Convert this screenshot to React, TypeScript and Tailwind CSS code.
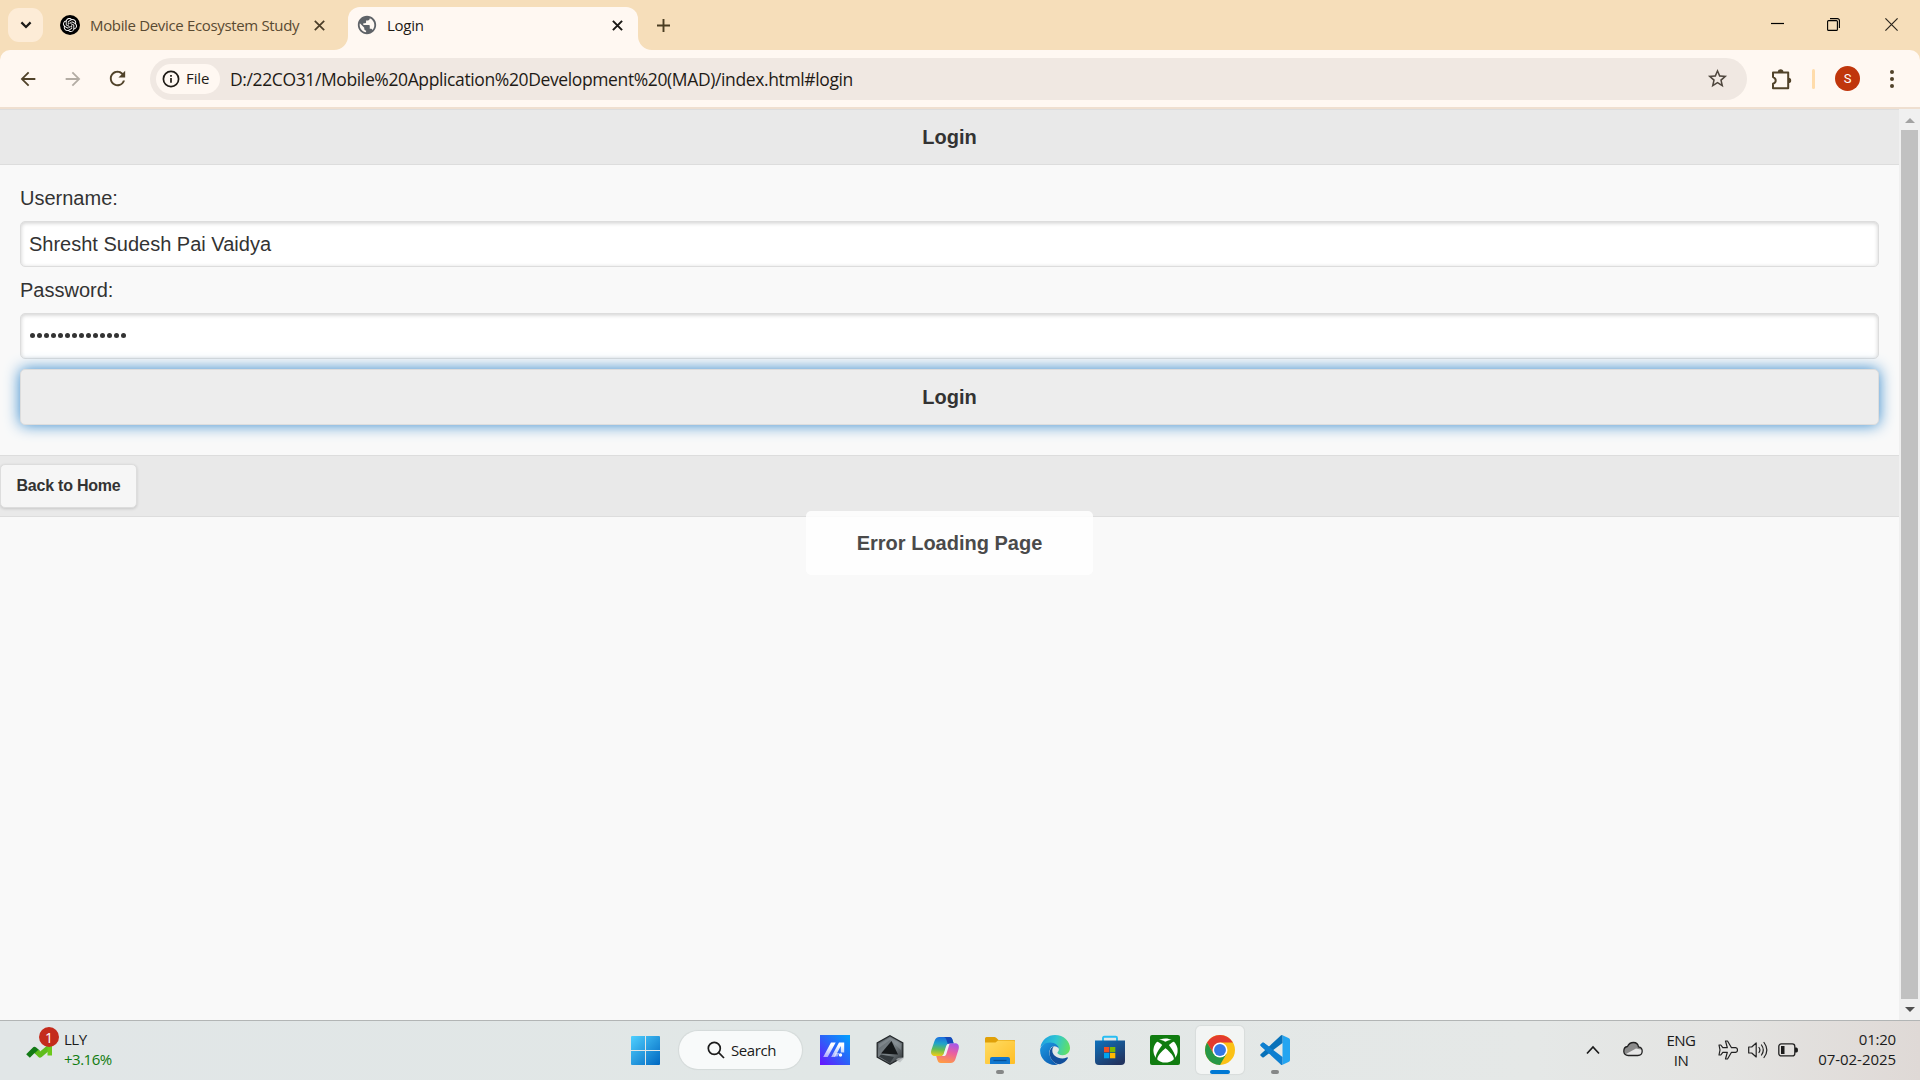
import React from "react";
import { SiOpenai } from "react-icons/si";
import { FaXbox } from "react-icons/fa";
import {
  MdArrowBack,
  MdArrowForward,
  MdRefresh,
  MdPublic,
  MdStarBorder,
} from "react-icons/md";

function TabStrip() {
  return (
    <div className="flex h-[50px] shrink-0 items-start bg-[#f6deba]">
      <div className="ml-2 mt-2 flex h-[34px] w-[35px] items-center justify-center rounded-[11px] bg-[#fdecd7]">
        <svg width="12" height="8" viewBox="0 0 12 8" fill="none" stroke="#1d1b18" strokeWidth="2.2">
          <path d="M1.4 1.4 6 6l4.600-4.600" />
        </svg>
      </div>
      <div className="ml-[17px] flex h-[50px] w-[288px] items-center">
        <span className="flex size-5 shrink-0 items-center justify-center rounded-full bg-black">
          <SiOpenai size={14} color="#fff" />
        </span>
        <span className="ml-[10px] w-[219px] shrink-0 whitespace-nowrap text-[15px] leading-5 tracking-[-0.34px] text-[#594a32]">
          Mobile Device Ecosystem Study
        </span>
        <svg className="ml-[5px] shrink-0" width="11" height="11" viewBox="0 0 11 11" stroke="#4a3d28" strokeWidth="1.7">
          <path d="M.8.8l9.400 9.400M10.200.8.8 10.200" />
        </svg>
      </div>
      <div className="relative mt-[7px] flex h-[43px] w-[290px] items-center rounded-t-[12px] bg-[#fff8f2] pb-[7px]">
        <svg className="absolute bottom-0 -left-[14px]" width="14" height="14" viewBox="0 0 14 14" fill="#fff8f2">
          <path d="M14 0v14H0A14 14 0 0 0 14 0z" />
        </svg>
        <svg className="absolute bottom-0 -right-[14px]" width="14" height="14" viewBox="0 0 14 14" fill="#fff8f2">
          <path d="M0 0v14h14A14 14 0 0 1 0 0z" />
        </svg>
        <MdPublic className="ml-[8px] shrink-0" size={22} color="#5f6368" />
        <span className="ml-[9px] w-[220px] text-[15px] leading-5 tracking-[-0.25px] text-[#1f1b16]">Login</span>
        <svg className="ml-[5px] shrink-0" width="11" height="11" viewBox="0 0 11 11" stroke="#1a1815" strokeWidth="2">
          <path d="M.9.9l9.200 9.200M10.100.9.9 10.100" />
        </svg>
      </div>
      <svg className="ml-[19px] mt-[19px]" width="13" height="13" viewBox="0 0 13 13" stroke="#4a3d22" strokeWidth="1.900">
        <path d="M6.500 0v13M0 6.500h13" />
      </svg>
      <div className="ml-auto mr-[22px] mt-[18px] flex items-start">
        <svg width="13" height="13" viewBox="0 0 13 13" stroke="#000" strokeWidth="1.200">
          <path d="M0 5.500h13" />
        </svg>
        <svg className="ml-[43px]" width="13" height="13" viewBox="0 0 13 13" fill="none" stroke="#000" strokeWidth="1.100">
          <rect x=".6" y="2.600" width="9.800" height="9.800" rx="1" />
          <path d="M3 .6h7.400a2 2 0 0 1 2 2V10" />
        </svg>
        <svg className="ml-[45px]" width="13" height="13" viewBox="0 0 13 13" stroke="#2b261e" strokeWidth="1.200">
          <path d="M.4.4l12.200 12.200M12.600.4.4 12.600" />
        </svg>
      </div>
    </div>
  );
}

function Toolbar() {
  return (
    <div className="h-[59px] shrink-0 bg-[#f6deba]">
      <div className="flex h-[59px] items-center rounded-t-[10px] border-b-2 border-[#efdfd0] bg-[#fff8f2]">
        <MdArrowBack className="ml-[17px] shrink-0" size={22} color="#51432a" />
        <MdArrowForward className="ml-[23px] shrink-0" size={22} color="#b3aca3" />
        <MdRefresh className="ml-[22px] shrink-0" size={23} color="#51432a" />
        <div className="ml-[21px] flex h-[42px] w-[1597px] shrink-0 items-center rounded-full bg-[#f0e8e2]">
          <span className="ml-[6px] flex h-[30px] w-[64px] items-center rounded-full bg-[#fff8f2] text-[#1f1b16]">
            <svg className="ml-[6px]" width="18" height="18" viewBox="0 0 18 18" fill="none" stroke="#1f1b16" strokeWidth="1.700">
              <circle cx="9" cy="9" r="7.600" />
              <path d="M9 8v4.800M9 5v1.700" />
            </svg>
            <span className="-mt-[1px] ml-[6px] text-[15px] font-medium leading-5 tracking-[-0.1px]">File</span>
          </span>
          <span className="ml-[10px] mt-[1px] whitespace-nowrap text-[17.5px] leading-6 tracking-[-0.38px] text-[#1f1b16]">
            D:/22CO31/Mobile%20Application%20Development%20(MAD)/index.html#login
          </span>
          <MdStarBorder className="ml-auto mr-[18px]" size={23} color="#4f473e" />
        </div>
        <svg className="ml-[23px] shrink-0" width="22" height="22" viewBox="0 0 22 22">
          <path d="M3 4.500h15.200v15.800H3v-4.600c1.700-.6 2.700-1.600 2.700-3.300S4.700 9.700 3 9.100z" fill="none" stroke="#51432a" strokeWidth="2" strokeLinejoin="round" />
          <path d="M7.800 4a2.800 2.800 0 0 1 5.600 0zM18.500 9.700a2.700 2.700 0 0 1 0 5.400z" fill="#51432a" />
        </svg>
        <div className="ml-[20px] h-5 w-[3px] rounded-full bg-[#ffdcab]" />
        <div className="ml-[20px] flex size-[25px] items-center justify-center rounded-full bg-[#c0360c] font-[Roboto,sans-serif] text-[13px] text-white">
          S
        </div>
        <div className="ml-[30px] flex flex-col gap-[3px]">
          <i className="size-[4px] rounded-full bg-[#51432a]" />
          <i className="size-[4px] rounded-full bg-[#51432a]" />
          <i className="size-[4px] rounded-full bg-[#51432a]" />
        </div>
      </div>
    </div>
  );
}

function LoginPage() {
  return (
    <div className="relative flex-1 bg-[#f9f9f9] font-['Liberation_Sans',Arial,sans-serif] text-[20px] text-[#333]">
      <h1 className="flex h-14 items-center justify-center border-y border-[#ddd] bg-[#e9e9e9] text-[20px] font-bold">
        Login
      </h1>
      <div className="flex h-[290px] flex-col px-5 pt-[20px]">
        <label className="h-9 leading-[26px]">Username:</label>
        <div className="flex h-[46px] shrink-0 items-center rounded-[5px] border border-[#ddd] bg-white pl-[8px] shadow-[inset_0_1px_4px_rgba(0,0,0,0.2)]">
          Shresht Sudesh Pai Vaidya
        </div>
        <label className="mt-[10px] h-9 leading-[26px]">Password:</label>
        <div className="flex h-[46px] shrink-0 items-center rounded-[5px] border border-[#ddd] bg-white pl-[8px] shadow-[inset_0_1px_4px_rgba(0,0,0,0.2)]">
          <div className="flex gap-[2px] pb-[2px] pl-[1px]">
            {Array.from({ length: 14 }, (_, i) => (
              <i key={i} className="size-[5px] rounded-full bg-[#333]" />
            ))}
          </div>
        </div>
        <button className="mt-[10px] h-14 shrink-0 rounded-[5px] border border-[#ddd] bg-[#ededed] font-bold shadow-[0_0_15px_#3388cc]">
          Login
        </button>
      </div>
      <div className="flex h-[62px] items-center border-y border-[#ddd] bg-[#e9e9e9]">
        <button className="h-[44px] w-[137px] rounded-[5px] border border-[#ddd] bg-[#f6f6f6] text-[16px] font-bold tracking-[-0.23px] shadow-[0_1px_3px_rgba(0,0,0,0.15)]">
          Back to Home
        </button>
      </div>
      <div className="absolute left-[806px] top-[402px] flex h-16 w-[287px] items-center justify-center rounded-[5px] bg-white font-bold opacity-[0.88]">
        Error Loading Page
      </div>
    </div>
  );
}

function Scrollbar() {
  return (
    <div className="flex w-[21px] shrink-0 flex-col items-center bg-[#f0f0f0]">
      <svg className="mt-[9px] shrink-0" width="10" height="5" viewBox="0 0 10 5" fill="#a3a3a3">
        <path d="M5 0l5 5H0z" />
      </svg>
      <div className="mt-[7px] h-[869px] w-[17px] bg-[#c1c1c1]" />
      <svg className="mt-[8px] shrink-0" width="10" height="5" viewBox="0 0 10 5" fill="#505050">
        <path d="M0 0h10L5 5z" />
      </svg>
    </div>
  );
}

const WindowsIcon = () => (
  <svg width="29" height="29" viewBox="0 0 29 29">
    <defs>
      <linearGradient id="win" x1="0" y1="0" x2="1" y2="1">
        <stop offset="0" stopColor="#4fd0ff" />
        <stop offset="1" stopColor="#0067c0" />
      </linearGradient>
    </defs>
    <path fill="url(#win)" d="M1 0h13v14H0V1a1 1 0 0 1 1-1zM15 0h13a1 1 0 0 1 1 1v13H15zM0 15h14v14H1a1 1 0 0 1-1-1zM15 15h14v13a1 1 0 0 1-1 1H15z" />
  </svg>
);

const AsusIcon = () => (
  <svg width="30" height="30" viewBox="0 0 30 30">
    <defs>
      <linearGradient id="asus" x1="0" y1="1" x2="1" y2="0">
        <stop offset="0" stopColor="#6a12ff" />
        <stop offset=".5" stopColor="#2c62f8" />
        <stop offset="1" stopColor="#00a2ff" />
      </linearGradient>
      <linearGradient id="asusInk" x1="0" y1="1" x2="0" y2="0">
        <stop offset="0" stopColor="#fff" stopOpacity=".55" />
        <stop offset=".8" stopColor="#fff" />
      </linearGradient>
    </defs>
    <path fill="url(#asus)" d="M0 0h30v30H0z" />
    <path fill="url(#asusInk)" d="M3.200 22 11 7.500h4.700L7.700 22zM11.200 22 19 7.500h5.200V17.500h-3.400V11L15 22z" />
    <path fill="#fff" d="M15.500 18h4l-2 3.500h-3.700z" opacity=".5" />
    <circle cx="20.500" cy="20" r="1.700" fill="#fff" />
  </svg>
);

const ArmouryIcon = () => (
  <svg width="30" height="30" viewBox="0 0 30 30">
    <defs>
      <linearGradient id="arm" x1="0" y1="0" x2="1" y2="1">
        <stop offset="0" stopColor="#565d62" />
        <stop offset=".5" stopColor="#7d858a" />
        <stop offset="1" stopColor="#25292c" />
      </linearGradient>
    </defs>
    <path d="M15 .8 27.800 8v14L15 29.200 2.200 22V8z" fill="url(#arm)" stroke="#24282b" strokeWidth="1.300" />
    <path d="M15 2.500 26 9v6L15 5 4 13V9z" fill="#9ca3a8" opacity=".4" />
    <path d="M16.500 6 23 19.500 6 18.500z" fill="#15181a" />
    <path d="M6 19.500 19 22l-4 6-11-6.500z" fill="#33393d" />
    <path d="M21 25c2-2.500 5-3 8-2l-4 4.500z" fill="#b5babc" opacity=".75" />
  </svg>
);

const CopilotIcon = () => (
  <svg width="30" height="30" viewBox="0 0 30 30">
    <defs>
      <linearGradient id="cpA" x1=".4" y1="0" x2=".3" y2="1">
        <stop offset="0" stopColor="#1b6fe0" />
        <stop offset=".35" stopColor="#20a4c8" />
        <stop offset=".65" stopColor="#62bd55" />
        <stop offset="1" stopColor="#f0cb16" />
      </linearGradient>
      <linearGradient id="cpB" x1=".7" y1="0" x2=".4" y2="1">
        <stop offset="0" stopColor="#a657e8" />
        <stop offset=".45" stopColor="#ea5fa2" />
        <stop offset="1" stopColor="#ff9a45" />
      </linearGradient>
    </defs>
    <path d="M9.500 2h9.700c2 0 2.800 1.200 3.400 3l1 3.200h-3.100c-2.300 0-3.300 1.200-4 3.400l-2.200 6.600c-.7 2.100-1.800 2.800-3.600 2.800H5c-3.300 0-4.600-2.600-3.600-6L4.500 6C5.400 3.200 7 2 9.500 2z" fill="url(#cpA)" />
    <path d="M20.500 28h-9.700c-2 0-2.800-1.200-3.400-3l-1.200-4h4.500c2.200 0 3.100-1 3.800-3.200l2.100-6.500c.7-2.200 1.900-3.100 3.800-3.100H25c3.300 0 4.600 2.600 3.600 6L25.500 24c-.9 2.800-2.500 4-5 4z" fill="url(#cpB)" />
    <path d="M14 2h5.200c2 0 2.800 1.200 3.400 3l1 3.200h-3.100c-1.200 0-2.100.3-2.700.9L16.500 5c-.5-1.600-1.300-2.600-2.500-3z" fill="#1549b8" />
    <path d="M13.800 18.500 16 11.600c.4-1.300.9-2.200 1.700-2.700h1.800l-3 9.500c-.6 1.800-1.400 2.600-2.700 2.600h-1.900c1-.4 1.500-1.200 1.900-2.500z" fill="#edf2f1" />
  </svg>
);

const FolderIcon = () => (
  <svg width="30" height="30" viewBox="0 0 30 30">
    <defs>
      <linearGradient id="fold" x1="0" y1="0" x2="1" y2="1">
        <stop offset="0" stopColor="#ffdc63" />
        <stop offset="1" stopColor="#ffbe26" />
      </linearGradient>
    </defs>
    <path d="M0 3.500Q0 2 1.500 2h8Q11 2 12 3.500L13.500 5H29q1 0 1 1v5H0z" fill="#e0a008" />
    <path d="M0 7.500h10.500L13 5.500h15.500Q30 5.500 30 7v21q0 1-1 1H1q-1 0-1-1z" fill="url(#fold)" />
    <path d="M5 29v-5q0-2 2-2h16q2 0 2 2v5z" fill="#1077d0" />
    <path d="M8.500 25.500h13" stroke="#074f96" strokeWidth="1.300" />
  </svg>
);

const EdgeIcon = () => (
  <svg width="30" height="30" viewBox="0 0 30 30">
    <defs>
      <linearGradient id="edA" x1="0" y1=".3" x2="1" y2=".5">
        <stop offset="0" stopColor="#1d9fe0" />
        <stop offset=".5" stopColor="#2fc6d2" />
        <stop offset="1" stopColor="#62e063" />
      </linearGradient>
      <linearGradient id="edB" x1="0" y1="0" x2=".7" y2="1">
        <stop offset="0" stopColor="#1d9ce4" />
        <stop offset="1" stopColor="#0c5db2" />
      </linearGradient>
    </defs>
    <path d="M.4 12.300C1.800 4.800 8 0 15 0c8.800 0 15 6.300 15 13 0 4.300-3.400 7.200-7.300 7.200-3.500 0-5.300-1.400-5.300-2.400 0-.8 1.500-1.300 1.500-3.600 0-3.300-3.300-6-8-6C5.800 8.200 2 10 .4 12.300z" fill="url(#edA)" />
    <path d="M.1 15.500C.1 10.500 4.900 7.400 10 7.400c5.500 0 8.900 3.200 8.900 6.400-1-1.500-2.500-2.500-4.500-2.500-3 0-5 2.800-5 6.400 0 5.300 3.800 10.300 8.800 11.900-1 .3-2 .4-3.200.4C6.700 30 .1 23.500.1 15.500z" fill="url(#edB)" />
    <path d="M14.200 11.300c-2.800.7-4.600 3.400-4.600 6.600 0 6.300 5.200 11.500 10.400 11.300 3.500-1 6.300-3.200 7.700-5.800.4-.8-.2-1.400-1-1-1.300.7-2.900 1-4.400 1-5.600 0-10-3.300-10-7.800 0-1.800.7-3.300 1.900-4.300z" fill="#124f9b" />
  </svg>
);

const StoreIcon = () => (
  <svg width="30" height="30" viewBox="0 0 30 30">
    <defs>
      <linearGradient id="sto" x1="0" y1="0" x2=".7" y2="1">
        <stop offset="0" stopColor="#0f72bd" />
        <stop offset="1" stopColor="#223460" />
      </linearGradient>
    </defs>
    <path d="M8 6V3q0-1.200 1.200-1.200h11.600Q22 1.800 22 3v3" fill="none" stroke="#29bdf2" strokeWidth="1.900" />
    <path d="M0 5.500h30V26q0 4-4 4H4q-4 0-4-4z" fill="url(#sto)" />
    <path d="M9 12h5.300v5.300H9z" fill="#f25022" />
    <path d="M15 12h5.300v5.300H15z" fill="#7fba00" />
    <path d="M9 18h5.300v5.300H9z" fill="#00a4ef" />
    <path d="M15 18h5.300v5.300H15z" fill="#ffb900" />
  </svg>
);

const XboxIcon = () => (
  <span className="flex size-[30px] items-center justify-center rounded-[2px] bg-[#107c10]">
    <FaXbox size={25} color="#fff" />
  </span>
);

const ChromeIcon = () => (
  <svg width="30" height="30" viewBox="0 0 48 48">
    <circle cx="24" cy="24" r="24" fill="#fbc116" />
    <path d="M24 12h20.780A24 24 0 0 0 3.220 12L13.610 30 24 24z" fill="#e33b2e" />
    <path d="M13.610 30 3.220 12A24 24 0 0 0 24 48l10.390-18L24 24z" fill="#279847" />
    <circle cx="24" cy="24" r="12" fill="#fff" />
    <circle cx="24" cy="24" r="9.500" fill="#3478e5" />
  </svg>
);

const CodeIcon = () => (
  <svg width="30" height="30" viewBox="0 0 30 30">
    <path d="M22.500.2 29 3.300q1 .5 1 1.600v20.200q0 1.100-1 1.600l-6.500 3.100z" fill="#24a5f1" />
    <path d="M22.500 29.800q-.9.400-1.700-.4L.6 10.800q-.8-.8 0-1.500L2.300 7.700q.7-.6 1.500 0l18.700 14.200z" fill="#0e7fd0" />
    <path d="M22.500.2q-.9-.4-1.700.4L.6 19.200q-.8.800 0 1.500l1.700 1.600q.7.600 1.500 0L22.500 8.100z" fill="#0871b9" />
    <path d="M.6 10.800 2.300 7.700 3.800 7.700 13 14.700 9.500 19z" fill="#0e7fd0" />
  </svg>
);

const apps = [
  { id: "asus", Icon: AsusIcon },
  { id: "armoury", Icon: ArmouryIcon },
  { id: "copilot", Icon: CopilotIcon },
  { id: "files", Icon: FolderIcon, open: true },
  { id: "edge", Icon: EdgeIcon },
  { id: "store", Icon: StoreIcon },
  { id: "xbox", Icon: XboxIcon },
  { id: "chrome", Icon: ChromeIcon, active: true },
  { id: "code", Icon: CodeIcon, open: true },
];

function Taskbar() {
  return (
    <div className="flex h-[60px] shrink-0 border-t border-[#b2b5b5] bg-[linear-gradient(90deg,#e1e6e7_0%,#e1e7e6_45%,#e5e8e7_80%,#e4e4e2_90%,#dfd9d6_100%)] text-[#1b1b1b]">
      <div className="flex w-[618px] pl-[26px]">
        <div className="relative w-[38px]">
          <svg className="mt-[22px]" width="29" height="16" viewBox="0 0 29 16" fill="none" strokeWidth="5.200" strokeLinejoin="round">
            <path d="M2 13 8.500 6.500l3.500 3" stroke="#137a16" />
            <path d="M10.500 8.500 14 12 23.500 4" stroke="#5fbd1c" />
            <path d="M26 0v12.500h-4.500V0z" fill="#6cc91c" />
          </svg>
          <span className="absolute left-[13px] top-[6px] flex size-5 items-center justify-center rounded-full bg-[#c42b1c] text-[14px] text-white">
            1
          </span>
        </div>
        <div className="pt-[8px] text-[15px] leading-[20px] tracking-[-0.5px]">
          <div>LLY</div>
          <div className="text-[#107c10]">+3.16%</div>
        </div>
      </div>
      <div className="flex w-[55px] items-center justify-center">
        <WindowsIcon />
      </div>
      <div className="ml-[6px] mr-[5px] mt-[10px] flex h-[38px] w-[123px] items-center rounded-full bg-[#f8fafa] shadow-[0_0_1px_1px_rgba(0,0,0,0.06)]">
        <svg className="ml-[28px]" width="18" height="18" viewBox="0 0 18 18" fill="none" stroke="#1b1b1b" strokeWidth="1.700">
          <circle cx="7.300" cy="7.300" r="6" />
          <path d="m11.700 11.700 5.300 5.300" />
        </svg>
        <span className="ml-[6px] text-[15px] leading-5 tracking-[-0.4px]">Search</span>
      </div>
      <div className="flex pl-[0.5px]">
        {apps.map(({ id, Icon, open, active }) => (
          <div key={id} className="flex w-[55px] justify-center pt-[5px]">
            <div
              className={
                active
                  ? "relative flex size-12 items-center justify-center rounded-[5px] bg-[#f3f5f4] shadow-[0_0_1px_1px_rgba(0,0,0,0.05)]"
                  : "relative flex size-12 items-center justify-center"
              }
            >
              <Icon />
              {open && <i className="absolute bottom-0 left-5 h-1 w-2 rounded-full bg-[#858787]" />}
              {active && <i className="absolute bottom-0 left-[14px] h-1 w-5 rounded-full bg-[#0078d4]" />}
            </div>
          </div>
        ))}
      </div>
      <div className="ml-auto mr-6 flex items-start">
        <svg className="mt-[24px]" width="14" height="10" viewBox="0 0 14 10" fill="none" stroke="#1b1b1b" strokeWidth="1.700">
          <path d="m1 8.500 6-6.500 6 6.500" />
        </svg>
        <svg className="ml-[23px] mt-[20px]" width="20" height="16" viewBox="0 0 20 16">
          <path d="M4.500 5.500C5.800 2.500 8 1.500 10.500 1.500s4.500 1.500 5 4.300c2.200.3 3.700 2 3.700 4.200 0 2.800-2 4.500-4.500 4.500H5.200C2.500 14.500.8 12.600.8 10.200s1.400-4.400 3.700-4.700z" fill="#e6e6e6" />
          <path d="M4.500 5.500C5.800 2.500 8 1.500 10.500 1.500s4.500 1.500 5 4.300c2 .4 3 1.500 3.300 3L13 7.500 3 13C1.500 12.500.8 11.500.8 10.200.8 7.900 2.200 5.800 4.500 5.500z" fill="#8b8b8b" />
          <path d="M4.500 5.500C5.800 2.500 8 1.500 10.500 1.500s4.500 1.500 5 4.300c2.200.3 3.700 2 3.700 4.200 0 2.800-2 4.500-4.500 4.500H5.200C2.500 14.500.8 12.600.8 10.200s1.400-4.400 3.700-4.700z" fill="none" stroke="#222" strokeWidth="1.300" />
        </svg>
        <div className="ml-[20px] mt-[9px] w-[36px] text-center text-[15px] leading-[20px] tracking-[-0.5px]">
          <div>ENG</div>
          <div>IN</div>
        </div>
        <svg className="ml-[19px] mt-[19px]" width="20" height="20" viewBox="0 0 20 20" fill="none" stroke="#222" strokeWidth="1.200" strokeLinejoin="round">
          <path d="M7.500 1h2l4 6.700h4.200q1.800.3 1.800 2.300t-1.800 2.300h-4.200l-4 6.700h-2l1.800-6.700H4.800L2.800 15H1l1-5-1-5h1.800l2 2.700h4.500z" />
        </svg>
        <svg className="ml-[10px] mt-[19px]" width="20" height="20" viewBox="0 0 20 20" fill="none" stroke="#222" strokeWidth="1.200" strokeLinejoin="round" strokeLinecap="round">
          <path d="M.7 7h3l4.500-4v14L3.700 13h-3z" />
          <path d="M11 7.500q1.800 2.500 0 5M13.500 5q3.600 5 0 10M16 2.500q5.700 7.500 0 15" />
        </svg>
        <svg className="ml-[10px] mt-[22px]" width="20" height="14" viewBox="0 0 20 14">
          <rect x=".8" y=".9" width="16" height="12" rx="2.500" fill="none" stroke="#222" strokeWidth="1.300" />
          <path d="M3 3h3.500v8H3zM17 4.500h1.500q1.500 0 1.500 2.500t-1.500 2.500H17z" fill="#1b1b1b" />
        </svg>
        <div className="mt-[8px] w-[98px] whitespace-nowrap text-right text-[15px] leading-[20px]">
          <div className="tracking-[-0.2px]">01:20</div>
          <div className="tracking-[-0.05px]">07-02-2025</div>
        </div>
      </div>
    </div>
  );
}

export default function App() {
  return (
    <div className="flex h-[1080px] w-[1920px] flex-col overflow-hidden font-['Open_Sans','Noto_Sans',sans-serif]">
      <TabStrip />
      <Toolbar />
      <div className="flex min-h-0 flex-1">
        <LoginPage />
        <Scrollbar />
      </div>
      <Taskbar />
    </div>
  );
}
